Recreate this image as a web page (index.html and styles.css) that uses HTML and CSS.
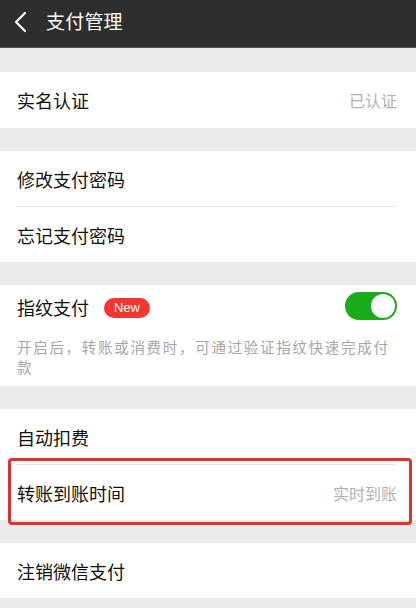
FILE: index.html
```html
<!DOCTYPE html>
<html lang="zh-CN">
<head>
<meta charset="utf-8">
<title>支付管理</title>
<link rel="stylesheet" href="styles.css">
</head>
<body>
<div class="page">
  <header class="topbar">
    <svg class="back" width="16" height="22" viewBox="0 0 16 22"><path d="M12 2 L3 11 L12 20" fill="none" stroke="#ffffff" stroke-width="2.2" stroke-linecap="round" stroke-linejoin="round"/></svg>
    <span class="title">支付管理</span>
  </header>

  <section class="group g1">
    <div class="row"><span class="label">实名认证</span><span class="value">已认证</span></div>
  </section>

  <section class="group">
    <div class="row"><span class="label">修改支付密码</span></div>
    <div class="divider"></div>
    <div class="row"><span class="label">忘记支付密码</span></div>
  </section>

  <section class="group">
    <div class="row row-fp">
      <span class="label">指纹支付</span>
      <span class="badge">New</span>
      <span class="toggle"><span class="knob"></span></span>
    </div>
    <p class="desc">开启后，转账或消费时，可通过验证指纹快速完成付款</p>
  </section>

  <section class="group">
    <div class="row"><span class="label">自动扣费</span></div>
    <div class="divider"></div>
    <div class="row row-mark"><span class="label">转账到账时间</span><span class="value">实时到账</span><span class="highlight"></span></div>
  </section>

  <section class="group">
    <div class="row"><span class="label">注销微信支付</span></div>
  </section>
</div>
</body>
</html>
```

FILE: styles.css
```css
html, body {
  margin: 0;
  padding: 0;
}
body {
  background: #ebebeb;
  font-family: "Noto Sans CJK SC", "Noto Sans", sans-serif;
  width: 416px;
  height: 608px;
  overflow: hidden;
}
.page {
  display: flex;
  flex-direction: column;
  gap: 23px;
}
.topbar {
  height: 48px;
  background: #2e2e2e;
  display: flex;
  align-items: center;
  padding-left: 13px;
  box-sizing: border-box;
  border-bottom: 1px solid #5a5a5a;
  margin-bottom: 1px;
}
.back {
  display: block;
  margin-top: -4px;
}
.title {
  color: #ffffff;
  font-size: 19px;
  margin-left: 17px;
  margin-top: -6px;
  letter-spacing: 0.2px;
}
.group {
  background: #ffffff;
  display: flex;
  flex-direction: column;
}
.group.g1 .row {
  height: 56px;
}
.row {
  height: 55px;
  display: flex;
  align-items: center;
  padding: 0 19px 0 17px;
  position: relative;
}
.label {
  font-size: 18px;
  color: #111111;
  flex: 1;
}
.value {
  font-size: 16px;
  color: #b2b2b2;
}
.divider {
  height: 1px;
  background: #e6e6e6;
  margin: 0 20px 0 16px;
}
.row-fp {
  height: 44px;
}
.row-fp .label {
  flex: 0 0 auto;
}
.badge {
  margin-left: 15px;
  width: 46px;
  height: 20px;
  border-radius: 10px;
  background: #f43530;
  color: #ffffff;
  font-family: "Liberation Sans", Arial, sans-serif;
  font-size: 13px;
  line-height: 20px;
  text-align: center;
  margin-top: 1px;
}
.toggle {
  margin-left: auto;
  width: 52px;
  height: 28px;
  border-radius: 14px;
  background: #1aad19;
  position: relative;
  margin-top: -2px;
}
.knob {
  position: absolute;
  right: 2px;
  top: 2px;
  width: 24px;
  height: 24px;
  border-radius: 50%;
  background: #ffffff;
}
.desc {
  margin: 8px 0 0;
  padding: 0 18px 9px 17px;
  font-size: 14.5px;
  letter-spacing: 1.7px;
  line-height: 20px;
  color: #a6a6a6;
}
.highlight {
  position: absolute;
  left: 8px;
  right: 4px;
  top: -7px;
  bottom: -5px;
  border: 3px solid #e3302a;
  border-radius: 4px;
}
```
